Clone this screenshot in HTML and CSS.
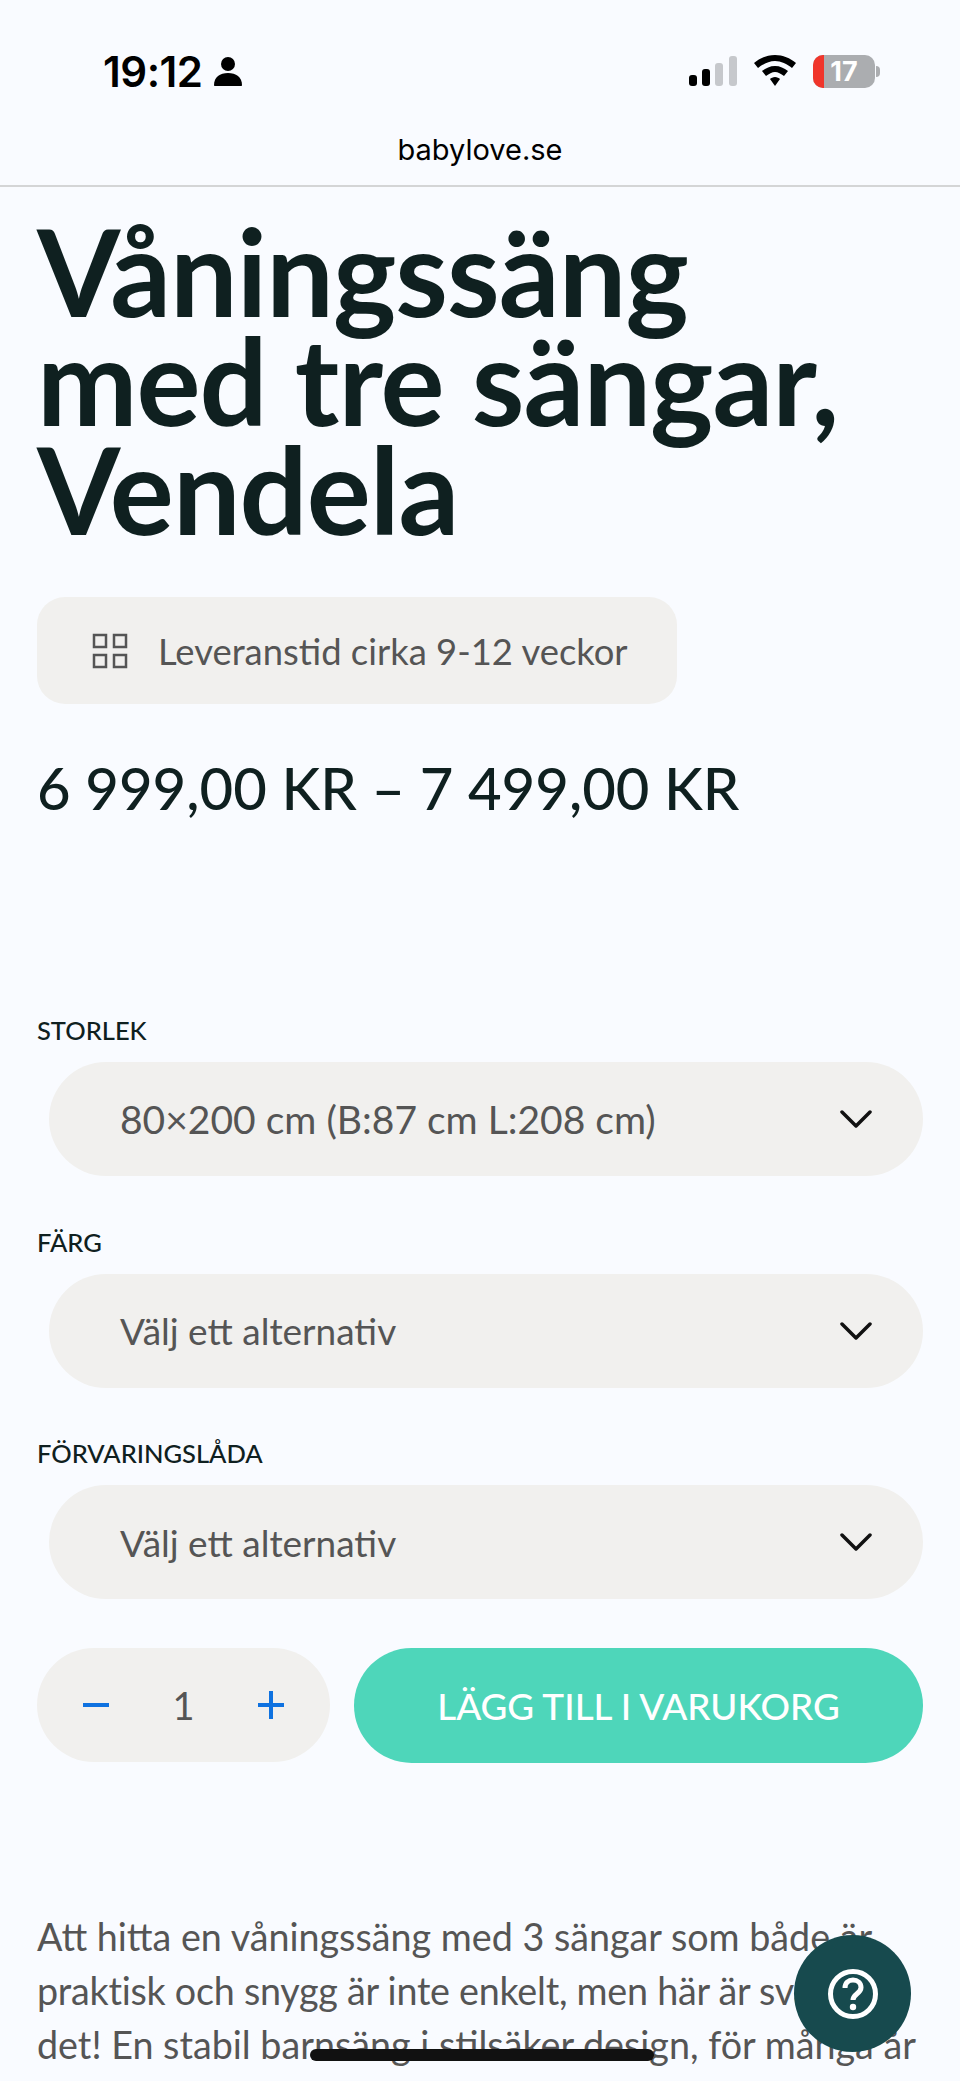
FILE: index.html
```html
<!DOCTYPE html>
<html lang="sv">

<head>
    <meta charset="UTF-8">
    <meta name="viewport" content="width=device-width, initial-scale=1.0">
    <title>Våningssäng med tre sängar, Vendela</title>
    <link rel="stylesheet" href="styles.css">
</head>

<body>
    <header class="status-bar">
        <div class="status-left">
            <span class="time">19:12</span>
            <svg class="person" width="28" height="30" viewBox="0 0 28 30">
                <circle cx="14" cy="8" r="7" fill="#000"/>
                <path d="M0 29c0-8 6-12 14-12s14 4 14 12c0 .6-.4 1-1 1H1c-.6 0-1-.4-1-1z" fill="#000"/>
            </svg>
        </div>
        <div class="status-right">
            <svg width="48" height="30" viewBox="0 0 48 30">
                <rect x="0" y="19" width="8" height="11" rx="3" fill="#000"/>
                <rect x="13" y="13" width="8" height="17" rx="3" fill="#000"/>
                <rect x="26" y="7" width="8" height="23" rx="3" fill="#c6c8cc"/>
                <rect x="40" y="0" width="8" height="30" rx="3" fill="#c6c8cc"/>
            </svg>
            <svg width="42" height="32" viewBox="0 0 42 32">
                <path d="M21 0c8 0 15 3 21 8l-4 5c-5-4-11-7-17-7S9 9 4 13L0 8C6 3 13 0 21 0z" fill="#000"/>
                <path d="M21 11c5 0 9 2 13 5l-4 5c-3-2-6-4-9-4s-6 2-9 4l-4-5c4-3 8-5 13-5z" fill="#000"/>
                <path d="M21 22c2 0 4 1 5 2l-5 7-5-7c1-1 3-2 5-2z" fill="#000"/>
            </svg>
            <div class="battery">
                <span class="battery-low"></span>
                <span class="battery-num">17</span>
                <span class="battery-cap"></span>
            </div>
        </div>
    </header>
    <div class="url-bar">babylove.se</div>

    <main class="product">
        <h1>Våningssäng<br>med tre sängar,<br>Vendela</h1>

        <div class="delivery">
            <svg width="36" height="36" viewBox="0 0 36 36" fill="none" stroke="#555" stroke-width="2.5">
                <rect x="2" y="2" width="12" height="12"/>
                <rect x="22" y="2" width="12" height="12"/>
                <rect x="2" y="22" width="12" height="12"/>
                <rect x="22" y="22" width="12" height="12"/>
            </svg>
            <span>Leveranstid cirka 9-12 veckor</span>
        </div>

        <div class="price">6 999,00 KR – 7 499,00 KR</div>

        <div class="options">
            <div class="option">
                <label>STORLEK</label>
                <div class="select">
                    <span>80×200 cm (B:87 cm L:208 cm)</span>
                    <svg width="32" height="20" viewBox="0 0 32 20" fill="none" stroke="#111" stroke-width="3.5" stroke-linecap="round" stroke-linejoin="round"><path d="M2 3l14 14L30 3"/></svg>
                </div>
            </div>
            <div class="option">
                <label>FÄRG</label>
                <div class="select">
                    <span class="placeholder">Välj ett alternativ</span>
                    <svg width="32" height="20" viewBox="0 0 32 20" fill="none" stroke="#111" stroke-width="3.5" stroke-linecap="round" stroke-linejoin="round"><path d="M2 3l14 14L30 3"/></svg>
                </div>
            </div>
            <div class="option">
                <label>FÖRVARINGSLÅDA</label>
                <div class="select">
                    <span class="placeholder">Välj ett alternativ</span>
                    <svg width="32" height="20" viewBox="0 0 32 20" fill="none" stroke="#111" stroke-width="3.5" stroke-linecap="round" stroke-linejoin="round"><path d="M2 3l14 14L30 3"/></svg>
                </div>
            </div>
        </div>

        <div class="buy-row">
            <div class="qty">
                <span class="qty-bar"></span>
                <span class="qty-num">1</span>
                <span class="qty-plus"></span>
            </div>
            <button class="add-cart">LÄGG TILL I VARUKORG</button>
        </div>

        <p class="intro">Att hitta en våningssäng med 3 sängar som både är<br><span class="intro-tight">praktisk och snygg är inte enkelt, men här är svaret på</span><br>det! En stabil barnsäng i stilsäker design, för många år</p>
    </main>

    <div class="help">
        <svg width="52" height="52" viewBox="0 0 52 52" fill="none">
            <circle cx="26" cy="26" r="22.5" stroke="#fff" stroke-width="5"/>
            <path d="M18 20c0-5 3.500-8 8-8s8 3 8 7.500c0 6-8 6.500-8 12.500" stroke="#fff" stroke-width="5"/>
            <circle cx="26" cy="39" r="3.200" fill="#fff"/>
        </svg>
    </div>
    <div class="home-bar"></div>
</body>

</html>
```

FILE: styles.css
```css
* {
    box-sizing: border-box;
}

html,
body {
    margin: 0;
    height: 2081px;
    overflow: hidden;
}

body {
    position: relative;
    background-color: #F9FBFF;
    font-family: "Lato", sans-serif;
    color: #0F2020;
}

.status-bar {
    display: flex;
    justify-content: space-between;
    align-items: center;
    height: 100px;
    padding: 42px 85px 0 103px;
}

.status-left {
    display: flex;
    align-items: center;
    gap: 12px;
}

.time {
    font-family: "Inter", sans-serif;
    font-size: 42px;
    font-weight: 600;
    color: #000;
    letter-spacing: -0.5px;
}

.status-right {
    display: flex;
    align-items: center;
    gap: 17px;
}

.battery {
    position: relative;
    display: flex;
    justify-content: center;
    align-items: center;
    width: 62px;
    height: 33px;
    background-color: #ABADB0;
    border-radius: 10px;
}

.battery-low {
    position: absolute;
    left: 0;
    top: 0;
    width: 11px;
    height: 33px;
    background-color: #F0352B;
    border-radius: 10px 0 0 10px;
}

.battery-num {
    font-family: "Inter", sans-serif;
    font-size: 27px;
    font-weight: 700;
    color: #fff;
}

.battery-cap {
    position: absolute;
    right: -5px;
    top: 11px;
    width: 4px;
    height: 11px;
    background-color: #ABADB0;
    border-radius: 0 4px 4px 0;
}

.url-bar {
    height: 87px;
    padding-top: 32px;
    text-align: center;
    font-family: "Inter", sans-serif;
    font-size: 29px;
    color: #000;
    border-bottom: 2px solid #D4D5D6;
}

.product {
    padding: 0 37px;
}

h1 {
    margin: 30px 0 0;
    font-size: 120px;
    font-weight: 700;
    line-height: 109px;
    letter-spacing: -1px;
    white-space: nowrap;
}

.delivery {
    display: flex;
    align-items: center;
    gap: 30px;
    width: 640px;
    height: 107px;
    margin-top: 53px;
    padding-left: 55px;
    background-color: #F1F0EE;
    border-radius: 28px;
    font-size: 36.4px;
    color: #555;
}

.price {
    margin-top: 50px;
    font-size: 58px;
    font-weight: 500;
    line-height: 68px;
}

.options {
    margin-top: 188px;
}

.option {
    margin-bottom: 45.5px;
}

.option label {
    display: block;
    height: 52px;
    padding-top: 4px;
    font-size: 25.5px;
    font-weight: 500;
    line-height: 32px;
}

.select {
    display: flex;
    justify-content: space-between;
    align-items: center;
    height: 114px;
    margin-left: 12px;
    padding: 0 51px 0 71px;
    background-color: #F1F0EE;
    border-radius: 57px;
    font-size: 39px;
    color: #555;
}

.placeholder {
    font-size: 37px;
}

.buy-row {
    display: flex;
    gap: 24px;
    margin-top: 49px;
}

.qty {
    display: flex;
    justify-content: space-between;
    align-items: center;
    width: 293px;
    height: 114px;
    padding: 0 46px;
    background-color: #F1F0EE;
    border-radius: 57px;
}

.qty-num {
    font-size: 38px;
    color: #555;
}

.qty-bar,
.qty-plus {
    position: relative;
    width: 26px;
    height: 4px;
    background-color: #0F72E0;
}

.qty-plus::after {
    content: '';
    position: absolute;
    left: 11px;
    top: -12px;
    width: 4px;
    height: 28px;
    background-color: #0F72E0;
}

.add-cart {
    flex: 1;
    height: 115px;
    border: none;
    border-radius: 58px;
    background-color: #4ED6BA;
    color: #fff;
    font-family: "Lato", sans-serif;
    font-size: 36.8px;
    font-weight: 500;
}

.intro {
    margin: 147px 0 0;
    font-size: 37.7px;
    line-height: 54px;
    white-space: nowrap;
    color: #555;
}

.intro-tight {
    letter-spacing: -0.25px;
}

.help {
    position: absolute;
    left: 794px;
    top: 1935px;
    display: flex;
    justify-content: center;
    align-items: center;
    width: 117px;
    height: 117px;
    background-color: #174A4E;
    border-radius: 50%;
}

.home-bar {
    position: absolute;
    left: 310px;
    top: 2049px;
    width: 344px;
    height: 12px;
    background-color: #111;
    border-radius: 6px;
}
```
